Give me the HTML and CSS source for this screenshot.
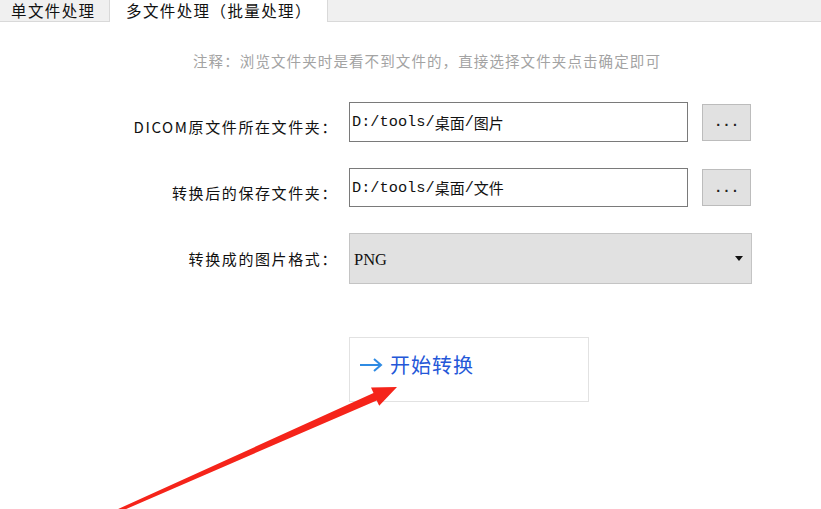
FILE: index.html
```html
<!DOCTYPE html>
<html lang="zh">
<head>
<meta charset="utf-8">
<title>DICOM 批量处理</title>
<link rel="stylesheet" href="styles.css">
</head>
<body>
<div class="tabs">
  <div class="tab tab-single">单文件处理</div>
  <div class="tab tab-multi">多文件处理（批量处理）</div>
  <div class="tab-fill"></div>
</div>
<p class="note">注释：浏览文件夹时是看不到文件的，直接选择文件夹点击确定即可</p>
<div class="form">
  <label class="label label-low">DICOM原文件所在文件夹：</label>
  <div class="input"><span class="mono">D:/tools/</span>桌面<span class="mono">/</span>图片</div>
  <button class="browse">...</button>

  <label class="label label-low">转换后的保存文件夹：</label>
  <div class="input"><span class="mono">D:/tools/</span>桌面<span class="mono">/</span>文件</div>
  <button class="browse">...</button>

  <label class="label">转换成的图片格式：</label>
  <div class="select"><span class="select-value">PNG</span><span class="caret"></span></div>
  <div></div>

  <button class="start">
    <svg class="start-icon" width="24" height="14" viewBox="0 0 24 14"><path d="M1 7H22M15 1L22 7L15 13" fill="none" stroke="#2f8be3" stroke-width="2"/></svg>
    <span>开始转换</span>
  </button>
</div>
<svg class="annotation" width="821" height="509" viewBox="0 0 821 509">
  <polygon fill="#f5241a" points="111.2,515.5 376.7,400.4 379.2,405.8 397,387 371,387.6 373.5,393 110,512.7"/>
</svg>
</body>
</html>
```
FILE: styles.css
```css
html, body {
  margin: 0;
  padding: 0;
}
body {
  width: 821px;
  height: 509px;
  overflow: hidden;
  position: relative;
  background: #fff;
  font-family: "Noto Sans CJK SC", "Liberation Sans", sans-serif;
  color: #111;
}
.tabs {
  display: flex;
  height: 22px;
}
.tab {
  box-sizing: border-box;
  height: 22px;
  font-size: 15.5px;
  line-height: 21px;
  white-space: nowrap;
  letter-spacing: 1.4px;
}
.tab-single {
  width: 110px;
  padding-left: 11px;
  background: #f0f0f0;
  border-right: 1px solid #d9d9d9;
  border-bottom: 1px solid #d9d9d9;
}
.tab-multi {
  width: 217px;
  padding-left: 16px;
  background: #fff;
}
.tab-fill {
  flex: 1;
  box-sizing: border-box;
  height: 22px;
  background: #f0f0f0;
  border-left: 1px solid #d9d9d9;
  border-bottom: 1px solid #d9d9d9;
}
.note {
  margin: 29px 0 0 0;
  padding-left: 193px;
  font-size: 14.5px;
  line-height: 20px;
  color: #a3a3a3;
  letter-spacing: 1.1px;
  white-space: nowrap;
}
.form {
  display: grid;
  grid-template-columns: 331px 339px 49px;
  grid-template-rows: 40px 39px 51px auto;
  column-gap: 18px;
  row-gap: 26px;
  margin-top: 31px;
}
.label {
  align-self: center;
  justify-self: end;
  font-size: 15px;
  letter-spacing: 1.6px;
  white-space: nowrap;
  margin-right: -7px;
}
.label-low {
  margin-top: 9px;
}
.input {
  box-sizing: border-box;
  border: 1px solid #7a7a7a;
  background: #fff;
  padding-left: 2px;
  display: flex;
  align-items: center;
  font-size: 15px;
  white-space: nowrap;
}
.mono {
  font-family: "Liberation Mono", monospace;
  font-size: 15.3px;
}
.browse {
  align-self: center;
  margin: 0 0 0 -4px;
  width: 49px;
  height: 37px;
  box-sizing: border-box;
  border: 1px solid #bcbcbc;
  background: #e1e1e1;
  font-family: "Liberation Mono", monospace;
  font-size: 14px;
  font-weight: bold;
  color: #222;
  padding: 0;
}
.select {
  box-sizing: border-box;
  border: 1px solid #c4c4c4;
  background: #e1e1e1;
  display: flex;
  align-items: center;
  justify-content: space-between;
  padding: 2px 8px 0 4px;
  margin-right: -64px;
}
.select-value {
  font-family: "Liberation Serif", serif;
  font-size: 16.5px;
}
.caret {
  width: 0;
  height: 0;
  border-left: 4px solid transparent;
  border-right: 4px solid transparent;
  border-top: 5px solid #111;
  margin-top: -2px;
}
.start {
  grid-column: 2;
  justify-self: start;
  margin-top: 27px;
  width: 240px;
  height: 65px;
  box-sizing: border-box;
  border: 1px solid #e2e2e2;
  background: #fff;
  display: flex;
  align-items: center;
  gap: 7px;
  padding: 0 0 0 9px;
  font-family: "Noto Sans CJK SC", sans-serif;
  font-size: 20px;
  color: #2457d8;
  letter-spacing: 1px;
}
.start-icon {
  display: block;
  margin-top: -9px;
}
.start span {
  margin-top: -11px;
}
.annotation {
  position: absolute;
  left: 0;
  top: 0;
  pointer-events: none;
}
```
